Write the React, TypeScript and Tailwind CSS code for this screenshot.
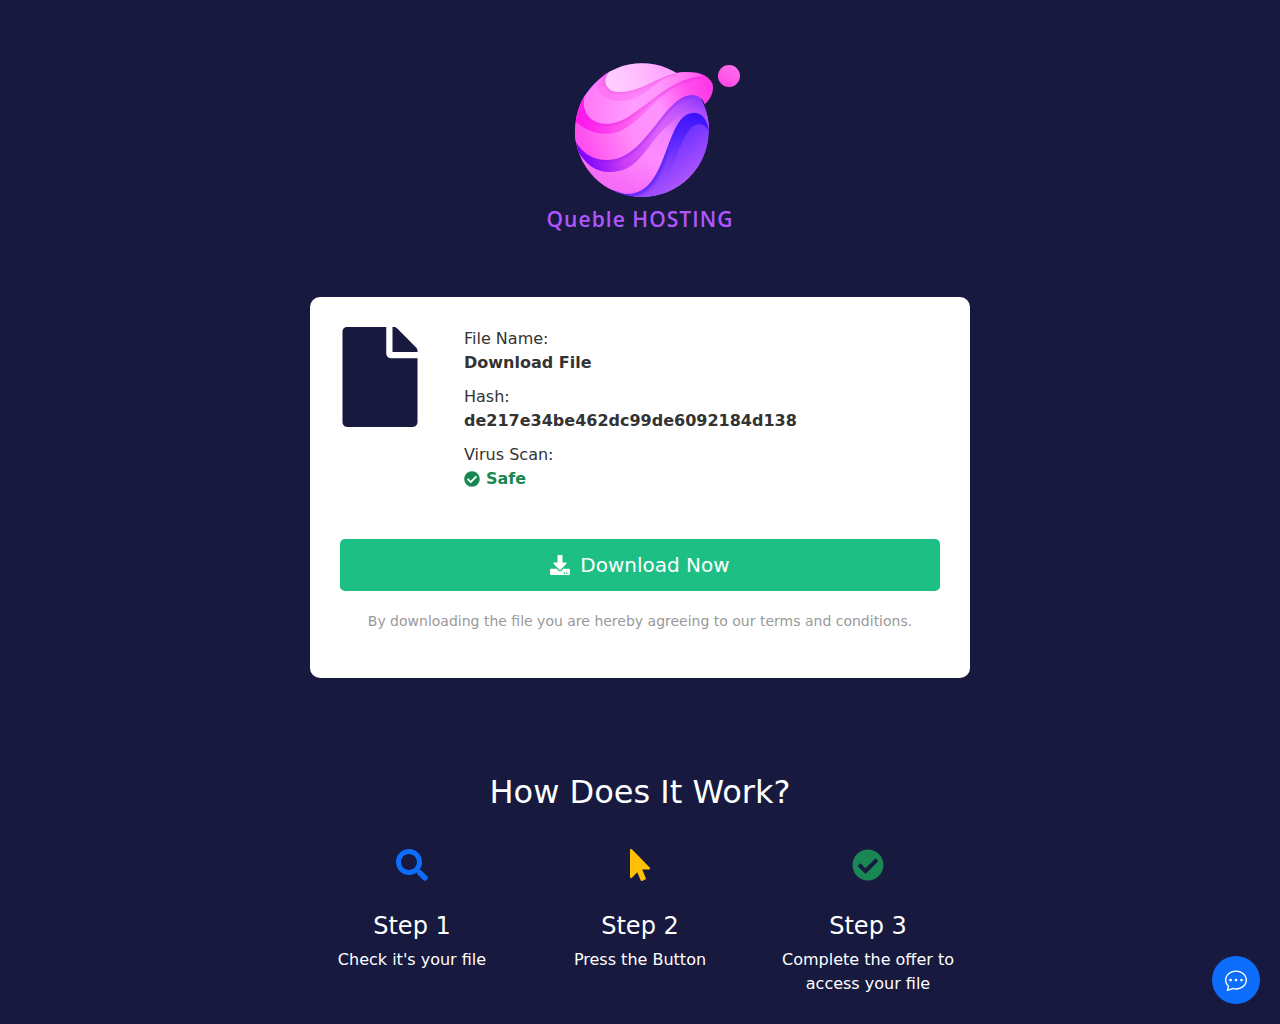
import React from 'react';
import { FaCheckCircle, FaDownload, FaFile, FaMousePointer, FaSearch } from 'react-icons/fa';
import { BsChatDots } from 'react-icons/bs';

const fileDetails = [
  { label: 'File Name:', value: 'Download File' },
  { label: 'Hash:', value: 'de217e34be462dc99de6092184d138' },
];

const steps = [
  { title: 'Step 1', text: "Check it's your file", icon: <FaSearch className="text-[#0d6efd]" /> },
  { title: 'Step 2', text: 'Press the Button', icon: <FaMousePointer className="text-[#ffc107]" /> },
  { title: 'Step 3', text: 'Complete the offer to access your file', icon: <FaCheckCircle className="text-[#198754]" /> },
];

const Logo = () => (
  <svg viewBox="0 30 660 420" className="h-[140px] w-[220px]" aria-hidden="true">
    <defs>
      <linearGradient id="base" gradientUnits="userSpaceOnUse" x1="420" y1="290" x2="500" y2="400">
        <stop offset="0" stopColor="#7436ff" />
        <stop offset="0.5" stopColor="#9747ff" />
        <stop offset="1" stopColor="#b85cf8" />
      </linearGradient>
      <linearGradient id="deep" gradientUnits="userSpaceOnUse" x1="480" y1="188" x2="400" y2="400">
        <stop offset="0" stopColor="#3c12fa" />
        <stop offset="0.3" stopColor="#4a1efc" stopOpacity="0.8" />
        <stop offset="0.7" stopColor="#6a30ff" stopOpacity="0.3" />
        <stop offset="1" stopColor="#7a3aff" stopOpacity="0" />
      </linearGradient>
      <linearGradient id="lower" gradientUnits="userSpaceOnUse" x1="475" y1="130" x2="330" y2="430">
        <stop offset="0" stopColor="#9038ff" />
        <stop offset="0.2" stopColor="#c85cfa" />
        <stop offset="0.4" stopColor="#f284fd" />
        <stop offset="0.65" stopColor="#ff8cff" />
        <stop offset="1" stopColor="#f76cf6" />
      </linearGradient>
      <linearGradient id="lowerShade" gradientUnits="userSpaceOnUse" x1="140" y1="300" x2="500" y2="140">
        <stop offset="0" stopColor="#7a00fa" />
        <stop offset="0.28" stopColor="#c93cf5" />
        <stop offset="0.55" stopColor="#da55fa" stopOpacity="0.9" />
        <stop offset="0.78" stopColor="#b848fc" stopOpacity="0.3" />
        <stop offset="0.9" stopColor="#8f32ff" stopOpacity="0" />
      </linearGradient>
      <linearGradient id="middle" gradientUnits="userSpaceOnUse" x1="150" y1="250" x2="540" y2="110">
        <stop offset="0" stopColor="#ff50ee" />
        <stop offset="0.35" stopColor="#ff8cfa" />
        <stop offset="0.6" stopColor="#ff94ff" />
        <stop offset="0.85" stopColor="#ff4cec" />
        <stop offset="1" stopColor="#ff38e8" />
      </linearGradient>
      <linearGradient id="middleShade" gradientUnits="userSpaceOnUse" x1="150" y1="180" x2="520" y2="90">
        <stop offset="0" stopColor="#ff1aee" />
        <stop offset="0.25" stopColor="#fb50ee" />
        <stop offset="0.6" stopColor="#ff70f4" stopOpacity="0.6" />
        <stop offset="1" stopColor="#ff44ee" />
      </linearGradient>
      <linearGradient id="upper" gradientUnits="userSpaceOnUse" x1="190" y1="90" x2="500" y2="130">
        <stop offset="0" stopColor="#ff7cf6" />
        <stop offset="0.4" stopColor="#ff9cff" />
        <stop offset="0.65" stopColor="#ff96fc" />
        <stop offset="1" stopColor="#ff60ee" />
      </linearGradient>
      <linearGradient id="top" gradientUnits="userSpaceOnUse" x1="230" y1="110" x2="400" y2="50">
        <stop offset="0" stopColor="#ffd0ff" />
        <stop offset="0.5" stopColor="#ffc0ff" />
        <stop offset="1" stopColor="#ffa4fc" />
      </linearGradient>
      <linearGradient id="moon" x1="0.8" y1="0" x2="0.3" y2="1">
        <stop offset="0" stopColor="#ff70e8" />
        <stop offset="1" stopColor="#ff48e8" />
      </linearGradient>
      <clipPath id="planet">
        <circle cx="336" cy="241" r="201" />
      </clipPath>
      <filter id="soft" x="-20%" y="-20%" width="140%" height="140%">
        <feGaussianBlur stdDeviation="5" />
      </filter>
      <clipPath id="middleClip">
        <path d="M137 270C160 312 190 330 232 330C350 330 400 135 488 135C508 136 520 148 524 163C545 145 553 120 547 100C530 64 480 62 438 69L240 20L100 140Z" />
      </clipPath>
      <clipPath id="upperClip">
        <path d="M164 140C150 190 185 222 232 222C320 220 400 82 520 78C490 64 460 66 438 69L330 30L200 60Z" />
      </clipPath>
      <clipPath id="lowerClip">
        <path d="M120 250L180 400L285 431C420 442 400 188 492 188C518 188 533 212 537 241L550 160L440 100Z" />
      </clipPath>
    </defs>
    <g clipPath="url(#planet)">
      <circle cx="336" cy="241" r="201" fill="url(#base)" />
      <path
        d="M370 441C440 400 400 188 492 188C520 188 535 212 540 250C530 225 510 216 490 228C455 250 440 350 370 441Z"
        fill="url(#deep)"
      />
      <path d="M285 431C420 442 400 188 492 188" fill="none" stroke="#4a18fa" strokeWidth="16" opacity="0.7" filter="url(#soft)" />
      <path
        d="M120 250L180 400L285 431C420 442 400 188 492 188C518 188 533 212 537 241L550 160L440 100Z"
        fill="url(#lower)"
      />
      <g clipPath="url(#lowerClip)">
        <path
          d="M130 280C165 348 200 367 245 366C330 364 350 280 412 228C440 200 470 170 515 165L500 110L200 220Z"
          fill="url(#lowerShade)"
        />
        <path d="M137 270C160 312 190 330 232 330C350 330 400 135 488 135" fill="none" stroke="#8a10ee" strokeWidth="8" opacity="0.6" filter="url(#soft)" />
      </g>
    </g>
    <path
      d="M137 275C160 312 190 330 232 330C350 330 400 135 488 135C508 136 520 148 524 163C545 145 553 120 547 100C530 64 480 62 438 69L240 66L164 138C142 170 130 225 137 275Z"
      fill="url(#middle)"
    />
    <g clipPath="url(#middleClip)">
      <path
        d="M164 135C135 165 132 190 137 215C165 240 195 252 235 251C300 248 340 185 400 135C440 102 480 84 520 78L430 80L240 160Z"
        fill="url(#middleShade)"
        clipPath="url(#planet)"
      />
      <path d="M162 165C160 200 190 222 232 222C320 220 400 82 520 78" fill="none" stroke="#e010dc" strokeWidth="7" opacity="0.5" filter="url(#soft)" />
    </g>
    <path
      d="M164 139C152 190 185 222 232 222C320 220 400 82 522 78C492 64 460 65 438 69L330 60L240 64C210 84 184 108 164 139Z"
      fill="url(#upper)"
    />
    <g clipPath="url(#upperClip)">
      <path
        d="M240 60C190 95 195 115 215 135C235 155 270 156 300 150C350 138 370 95 438 69L300 60Z"
        fill="#fb60ee"
        opacity="0.4"
        clipPath="url(#planet)"
      />
      <path d="M232 70C210 100 235 126 268 126C330 128 380 80 438 69" fill="none" stroke="#f03ce8" strokeWidth="7" opacity="0.5" filter="url(#soft)" />
    </g>
    <g clipPath="url(#planet)">
      <path d="M242 62C212 88 226 126 268 126C330 128 380 80 442 69L420 20L260 20Z" fill="url(#top)" />
    </g>
    <circle cx="597" cy="78" r="33" fill="url(#moon)" />
  </svg>
);

const App = () => {
  return (
    <div className="min-h-screen bg-[#17193f] font-['DejaVu_Sans',sans-serif] text-base text-white">
      <header className="flex flex-col items-center pt-[60px]">
        <Logo />
        <p className="mt-[3px] font-['Open_Sans',sans-serif] text-[21px] leading-8 font-semibold tracking-wider text-[#b056ff]">
          Queble HOSTING
        </p>
      </header>

      <main className="mx-auto max-w-[684px] px-3">
        <section className="mt-[62px] rounded-[10px] bg-white px-[30px] pt-[30px] pb-[47px] text-[#333]">
          <div className="flex gap-11">
            <div className="flex w-20 shrink-0 justify-center">
              <FaFile className="h-[100px] w-[76px] text-[#17193f]" />
            </div>
            <dl className="min-w-0 space-y-[10px]">
              {fileDetails.map((item) => (
                <div key={item.label}>
                  <dt>{item.label}</dt>
                  <dd className="font-bold break-words">{item.value}</dd>
                </div>
              ))}
              <div>
                <dt>Virus Scan:</dt>
                <dd className="flex items-center gap-[6px] font-bold text-[#198754]">
                  <FaCheckCircle />
                  Safe
                </dd>
              </div>
            </dl>
          </div>

          <button
            type="button"
            className="mt-12 flex h-[52px] w-full items-center justify-center gap-[10px] rounded-[5px] bg-[#1dbf84] text-xl text-white"
          >
            <FaDownload />
            Download Now
          </button>
          <p className="mt-5 text-center text-sm text-[#999]">
            By downloading the file you are hereby agreeing to our terms and conditions.
          </p>
        </section>
      </main>

      <section className="mx-auto max-w-[684px] pt-24 pb-7 text-center">
        <h2 className="text-[32px] leading-9">How Does It Work?</h2>
        <div className="mt-[39px] grid grid-cols-3">
          {steps.map((step) => (
            <div key={step.title} className="px-3">
              <div className="flex justify-center text-[32px]">{step.icon}</div>
              <h3 className="mt-[31px] text-2xl leading-7">{step.title}</h3>
              <p className="mt-2">{step.text}</p>
            </div>
          ))}
        </div>
      </section>

      <button
        type="button"
        aria-label="Open chat"
        className="fixed right-5 bottom-5 flex size-12 items-center justify-center rounded-full bg-[#0d6efd] text-[22px] text-white"
      >
        <BsChatDots />
      </button>
    </div>
  );
};

export default App;
